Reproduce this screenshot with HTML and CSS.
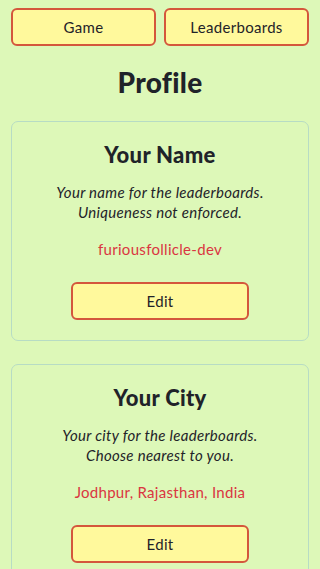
FILE: index.html
```html
<!DOCTYPE html>
<html lang="en">
<head>
<meta charset="utf-8">
<title>Profile</title>
<link rel="stylesheet" href="styles.css">
</head>
<body>
<nav class="nav">
  <button class="btn nav-btn">Game</button>
  <button class="btn nav-btn">Leaderboards</button>
</nav>
<h1 class="title">Profile</h1>
<section class="card">
  <h2 class="card-title">Your Name</h2>
  <p class="card-desc">Your name for the leaderboards.<br>Uniqueness not enforced.</p>
  <p class="card-value">furiousfollicle-dev</p>
  <button class="btn edit-btn">Edit</button>
</section>
<section class="card">
  <h2 class="card-title">Your City</h2>
  <p class="card-desc">Your city for the leaderboards.<br>Choose nearest to you.</p>
  <p class="card-value">Jodhpur, Rajasthan, India</p>
  <button class="btn edit-btn">Edit</button>
</section>
</body>
</html>
```
FILE: styles.css
```css
html, body {
  margin: 0;
  background: #ddf8b8;
}
body {
  padding: 8px 11px 20px;
  font-family: Lato, "Open Sans", sans-serif;
  color: #1f2329;
}
.nav {
  display: grid;
  grid-template-columns: 1fr 1fr;
  gap: 8px;
}
.btn {
  font-family: Lato, "Open Sans", sans-serif;
  font-size: 15px;
  color: #1f2329;
  background: #fff99c;
  border: 2px solid #d4573c;
  border-radius: 6px;
  height: 38px;
  padding: 0;
  letter-spacing: 0.3px;
}
.title {
  margin: 19px 0 22px;
  text-align: center;
  font-size: 28px;
  line-height: 34px;
  font-weight: 900;
  letter-spacing: 0.3px;
}
.card {
  border: 1px solid #b7dcc4;
  border-radius: 7px;
  padding: 20px 20px 20px;
  display: flex;
  flex-direction: column;
  align-items: center;
  text-align: center;
  margin-bottom: 23px;
}
.card-title {
  margin: 0;
  font-size: 22px;
  line-height: 26px;
  font-weight: 900;
  letter-spacing: 0.3px;
}
.card-desc {
  margin: 14px 0 0;
  font-size: 15px;
  line-height: 20px;
  font-style: italic;
  letter-spacing: 0.3px;
}
.card-value {
  margin: 17px 0 0;
  font-size: 15px;
  line-height: 20px;
  color: #da3641;
  letter-spacing: 0.3px;
}
.edit-btn {
  margin-top: 23px;
  width: 178px;
}
```
